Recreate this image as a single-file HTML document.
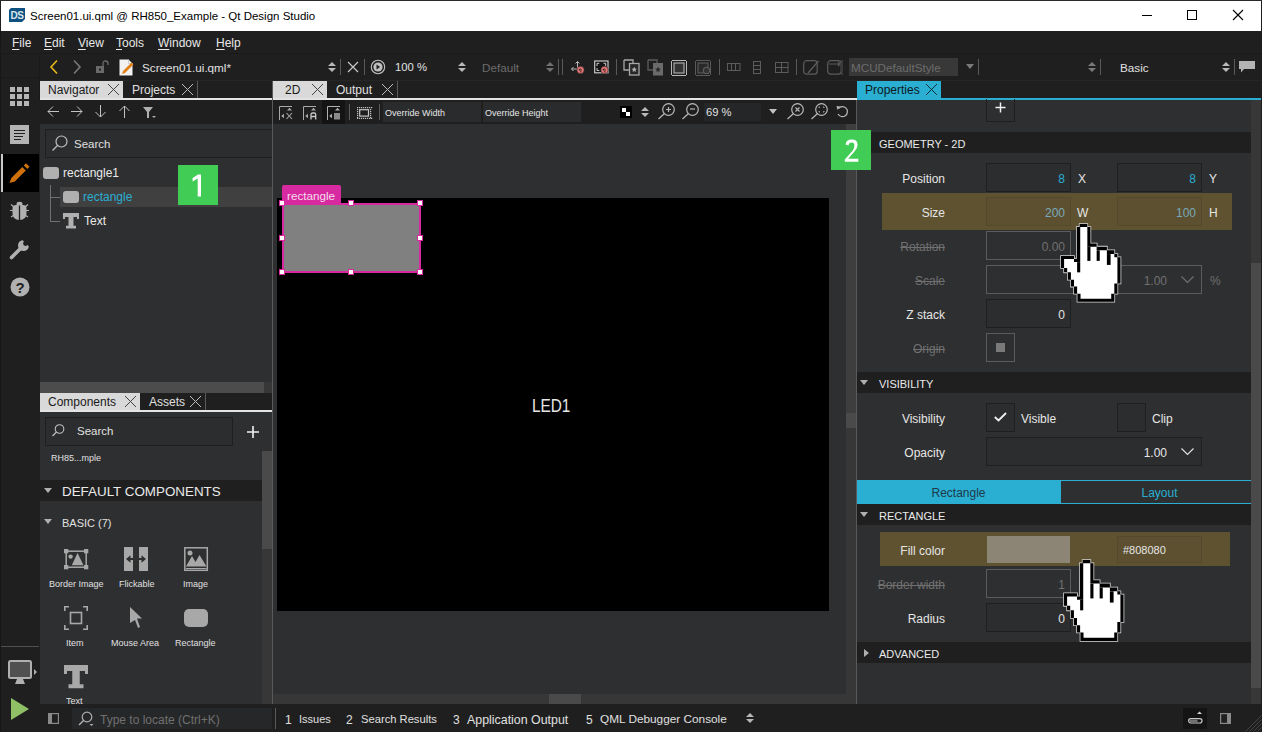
<!DOCTYPE html>
<html><head><meta charset="utf-8">
<style>
*{margin:0;padding:0;box-sizing:border-box}
html,body{width:1262px;height:732px;overflow:hidden;background:#1f1f1f;font-family:"Liberation Sans",sans-serif;color:#e6e6e6}
.a{position:absolute}
.t{position:absolute;white-space:nowrap;line-height:1;margin-top:1px}
svg{position:absolute;overflow:visible}
.sep{position:absolute;width:1px;background:#5a5a5a}
u{text-decoration:underline;text-underline-offset:1.5px;text-decoration-thickness:1px}
</style></head><body>
<!-- title bar -->
<div class="a" style="left:1px;top:1px;width:1260px;height:30px;background:#fff"></div>
<div class="a" style="left:0;top:0;width:1262px;height:1px;background:#2a2a2a"></div>
<svg style="left:9px;top:8px" width="16" height="14" viewBox="0 0 16 14"><path d="M2 0H16V11L13 14H0V2Z" fill="#0e5180"/><text x="1.6" y="11.2" font-family="Liberation Sans" font-weight="bold" font-size="10" fill="#d8e4ec" letter-spacing="-0.6">DS</text></svg>
<div class="t" style="left:30px;top:10px;font-size:11.5px;color:#000">Screen01.ui.qml @ RH850_Example - Qt Design Studio</div>
<div class="a" style="left:1142px;top:15px;width:10px;height:1px;background:#000"></div>
<div class="a" style="left:1187px;top:10px;width:10px;height:10px;border:1px solid #000"></div>
<svg style="left:1233px;top:10px" width="10" height="10" viewBox="0 0 10 10"><path d="M0 0L10 10M10 0L0 10" stroke="#000" stroke-width="1.1"/></svg>

<!-- menu bar -->
<div class="t" style="left:12px;top:36px;font-size:12px;color:#e8e8e8"><u>F</u>ile</div>
<div class="t" style="left:44px;top:36px;font-size:12px;color:#e8e8e8"><u>E</u>dit</div>
<div class="t" style="left:78px;top:36px;font-size:12px;color:#e8e8e8"><u>V</u>iew</div>
<div class="t" style="left:116px;top:36px;font-size:12px;color:#e8e8e8"><u>T</u>ools</div>
<div class="t" style="left:158px;top:36px;font-size:12px;color:#e8e8e8"><u>W</u>indow</div>
<div class="t" style="left:216px;top:36px;font-size:12px;color:#e8e8e8"><u>H</u>elp</div>

<!-- left mode sidebar -->
<div class="a" style="left:0;top:53px;width:40px;height:679px;background:#1f1f1f"></div>
<div class="a" style="left:0;top:31px;width:1px;height:701px;background:#171717"></div>
<div class="a" style="left:0;top:53px;width:1262px;height:1px;background:#1a1a1a"></div>
<div class="a" style="left:1px;top:77px;width:38px;height:1px;background:#1a1a1a"></div>
<div class="a" style="left:39px;top:54px;width:1px;height:46px;background:#1a1a1a"></div>
<div class="a" style="left:40px;top:80px;width:1222px;height:1px;background:#262626"></div>
<svg style="left:10px;top:87px" width="20" height="20" viewBox="0 0 20 20" fill="#b4b4b4"><rect x="0" y="0" width="5" height="5"/><rect x="7" y="0" width="5" height="5"/><rect x="14" y="0" width="5" height="5"/><rect x="0" y="7" width="5" height="5"/><rect x="7" y="7" width="5" height="5"/><rect x="14" y="7" width="5" height="5"/><rect x="0" y="14" width="5" height="5"/><rect x="7" y="14" width="5" height="5"/><rect x="14" y="14" width="5" height="5"/></svg>
<svg style="left:10px;top:125px" width="20" height="20" viewBox="0 0 20 20"><rect x="0" y="0" width="19" height="19" fill="#b4b4b4"/><path d="M4 5.5H15M4 8.5H15M4 11.5H13M4 14.5H11" stroke="#1f1f1f" stroke-width="1.2"/></svg>
<div class="a" style="left:3px;top:154px;width:36px;height:38px;background:#000"></div>
<div class="a" style="left:1px;top:154px;width:2px;height:38px;background:#c8c8c8"></div>
<svg style="left:9px;top:163px" width="21" height="21" viewBox="0 0 21 21"><path d="M0.5 20L2.3 15L13.3 4L16.8 7.5L5.8 18.5Z" fill="#d0700a"/><path d="M14.8 2.5L17 0.3L20.5 3.8L18.3 6Z" fill="#d0700a"/></svg>
<svg style="left:9px;top:200px" width="22" height="22" viewBox="0 0 22 22" fill="#b0b0b0"><ellipse cx="10.5" cy="4" rx="3" ry="2.3"/><path d="M3.5 8Q3.5 5 7 5H14Q17.5 5 17.5 8V13Q17.5 20 10.5 20Q3.5 20 3.5 13Z"/><path d="M10.5 5.5V20" stroke="#1f1f1f" stroke-width="1.3"/><path d="M1 10.5H4M17 10.5H20M2 4.5L5 7M19 4.5L16 7M2 17L5 15M19 17L16 15" stroke="#b0b0b0" stroke-width="1.2"/></svg>
<svg style="left:10px;top:239px" width="20" height="20" viewBox="0 0 20 20"><path d="M1.5 18.5L10 10" stroke="#b0b0b0" stroke-width="3.6" stroke-linecap="round"/><circle cx="13.5" cy="6.5" r="5.5" fill="#b0b0b0"/><path d="M12 0.5L19.5 8L20 0Z" fill="#1f1f1f"/><circle cx="15.5" cy="4.5" r="2.4" fill="#1f1f1f"/></svg>
<svg style="left:10px;top:277px" width="20" height="20" viewBox="0 0 20 20"><circle cx="10" cy="10" r="9.5" fill="#b0b0b0"/><text x="10" y="15.5" text-anchor="middle" font-family="Liberation Sans" font-weight="bold" font-size="15" fill="#1f1f1f">?</text></svg>
<div class="a" style="left:1px;top:646px;width:38px;height:1px;background:#505050"></div>
<svg style="left:8px;top:660px" width="28" height="26" viewBox="0 0 28 26"><rect x="1" y="1" width="22" height="17" rx="1.5" fill="#505050" stroke="#b0b0b0" stroke-width="2"/><path d="M9 19H15L17 24H7Z" fill="#b0b0b0"/><path d="M26 9L29 12L26 15Z" fill="#b0b0b0"/></svg>
<svg style="left:11px;top:698px" width="19" height="22" viewBox="0 0 19 22"><path d="M0 0L18 11L0 22Z" fill="#8fc066"/></svg>

<!-- main toolbar -->
<svg style="left:50px;top:60px" width="8" height="14" viewBox="0 0 8 14"><path d="M7 0.5L1 7L7 13.5" stroke="#e8b818" stroke-width="1.6" fill="none"/></svg>
<svg style="left:73px;top:60px" width="8" height="14" viewBox="0 0 8 14"><path d="M1 0.5L7 7L1 13.5" stroke="#7a7a7a" stroke-width="1.6" fill="none"/></svg>
<svg style="left:96px;top:60px" width="13" height="13" viewBox="0 0 13 13"><rect x="0" y="6" width="8" height="7" fill="#6a6a6a"/><rect x="3" y="8.5" width="2" height="2" fill="#1f1f1f"/><path d="M7 6V3.5Q7 1 9.5 1Q12 1 12 3.5V5" stroke="#6a6a6a" stroke-width="1.3" fill="none"/></svg>
<svg style="left:119px;top:59px" width="15" height="17" viewBox="0 0 15 17"><path d="M0.5 0.5H9.5L13.5 4.5V16.5H0.5Z" fill="#f2f2f2"/><path d="M9.5 0.5V4.5H13.5" fill="none" stroke="#c8c8c8" stroke-width="0.8"/><path d="M3 15L4 12L12.5 3.5L14.5 5.5L6 14Z" fill="#e0801a"/></svg>
<div class="t" style="left:142px;top:61px;font-size:11.7px;color:#e0e0e0">Screen01.ui.qml*</div>
<!-- toolbar continued -->
<svg style="left:328px;top:62px" width="8" height="11" viewBox="0 0 8 11" fill="#b8b8b8"><path d="M4 0L8 4H0Z"/><path d="M0 6H8L4 10Z"/></svg>
<div class="sep" style="left:340px;top:59px;height:16px"></div>
<svg style="left:348px;top:62px" width="10" height="10" viewBox="0 0 10 10"><path d="M0 0L10 10M10 0L0 10" stroke="#c8c8c8" stroke-width="1.2"/></svg>
<div class="sep" style="left:364px;top:59px;height:16px"></div>
<svg style="left:370px;top:59px" width="16" height="16" viewBox="0 0 16 16"><circle cx="8" cy="8" r="6.7" fill="none" stroke="#c0c0c0" stroke-width="1.1"/><circle cx="8" cy="8" r="4.6" fill="#c0c0c0"/><path d="M6.5 5.6L10.2 8L6.5 10.4Z" fill="#1f1f1f"/></svg>
<div class="t" style="left:395px;top:61px;font-size:11.3px;color:#e0e0e0">100 %</div>
<svg style="left:458px;top:62px" width="8" height="11" viewBox="0 0 8 11" fill="#b8b8b8"><path d="M4 0L8 4H0Z"/><path d="M0 6H8L4 10Z"/></svg>
<div class="t" style="left:482px;top:61px;font-size:11.7px;color:#6c6c6c">Default</div>
<svg style="left:546px;top:62px" width="8" height="11" viewBox="0 0 8 11" fill="#707070"><path d="M4 0L8 4H0Z"/><path d="M0 6H8L4 10Z"/></svg>
<div class="sep" style="left:558px;top:59px;height:16px"></div>
<div class="sep" style="left:562px;top:59px;height:16px"></div>
<svg style="left:570px;top:60px" width="16" height="16" viewBox="0 0 16 16"><path d="M7.5 1.5V11M1.5 9H10M7.5 1.5L5.5 3.5M7.5 1.5L9.5 3.5M1.5 9L3.5 7M1.5 9L3.5 11" stroke="#b8b8b8" stroke-width="1" fill="none"/><circle cx="10.5" cy="10" r="3.7" fill="#e87878" stroke="#1f1f1f" stroke-width="0.6"/><path d="M8.8 10H12M10.5 8.3L9 10M10 11.8H11.5" stroke="#2a1a1a" stroke-width="0.9" fill="none"/></svg>
<svg style="left:594px;top:60px" width="16" height="16" viewBox="0 0 16 16"><rect x="0.7" y="1" width="13.3" height="11.8" fill="#141414" stroke="#c8c8c8" stroke-width="1.2"/><path d="M3 6V3.3H5.3M9.5 3.3H11.7V6M3 8V10.5H5.3" stroke="#c8c8c8" stroke-width="1" fill="none"/><circle cx="10.5" cy="10" r="3.7" fill="#e87878" stroke="#1f1f1f" stroke-width="0.6"/><path d="M8.8 10H12M10.5 8.3L9 10M10 11.8H11.5" stroke="#2a1a1a" stroke-width="0.9" fill="none"/></svg>
<div class="sep" style="left:616px;top:59px;height:16px"></div>
<svg style="left:623px;top:59px" width="17" height="17" viewBox="0 0 17 17"><path d="M1 1H10V6M6 11H1V1" fill="none" stroke="#a8a8a8" stroke-width="1.3"/><rect x="6.5" y="4.5" width="9.5" height="11.5" fill="#262626" stroke="#a8a8a8" stroke-width="1.3"/><path d="M11.2 7.5L12 9.5L14 9.7L12.5 11L13 13L11.2 12L9.5 13L10 11L8.5 9.7L10.5 9.5Z" fill="#b0b0b0"/></svg>
<svg style="left:647px;top:59px" width="17" height="17" viewBox="0 0 17 17"><path d="M1 1H10V6M6 11H1V1" fill="none" stroke="#5c5c5c" stroke-width="1.3"/><rect x="6" y="4" width="10" height="12.5" fill="#6a6a6a"/><path d="M11 7.5L11.8 9.5L13.8 9.7L12.3 11L12.8 13L11 12L9.3 13L9.8 11L8.3 9.7L10.3 9.5Z" fill="#262626"/></svg>
<svg style="left:671px;top:60px" width="16" height="16" viewBox="0 0 16 16"><path d="M1 0.5H15M1 15.5H15M0.5 1V15M15.5 1V15" stroke="#b8b8b8" stroke-width="1"/><rect x="3" y="3" width="10" height="10" fill="#333" stroke="#aaa" stroke-width="1.2"/></svg>
<svg style="left:695px;top:60px" width="16" height="16" viewBox="0 0 16 16"><path d="M1 0.5H15M1 15.5H15M0.5 1V15M15.5 1V15" stroke="#5a5a5a" stroke-width="1"/><rect x="3" y="3" width="10" height="10" fill="#2a2a2a" stroke="#5a5a5a" stroke-width="1.2"/><circle cx="11.5" cy="10.5" r="3.3" fill="#333" stroke="#666" stroke-width="1"/></svg>
<div class="sep" style="left:719px;top:59px;height:16px"></div>
<svg style="left:727px;top:63px" width="14" height="8" viewBox="0 0 14 8"><rect x="0.5" y="0.5" width="12.5" height="7" fill="none" stroke="#5c5c5c"/><path d="M4.5 0.5V7.5M8.5 0.5V7.5" stroke="#5c5c5c"/></svg>
<svg style="left:753px;top:61px" width="8" height="13" viewBox="0 0 8 13"><rect x="0.5" y="0.5" width="7" height="12" fill="none" stroke="#5c5c5c"/><path d="M0.5 4.5H7.5M0.5 8.5H7.5" stroke="#5c5c5c"/></svg>
<svg style="left:775px;top:62px" width="14" height="11" viewBox="0 0 14 11"><rect x="0.5" y="0.5" width="12.5" height="10" fill="none" stroke="#5c5c5c"/><path d="M6.5 0.5V10.5M0.5 5.5H13" stroke="#5c5c5c"/></svg>
<div class="sep" style="left:796px;top:59px;height:16px"></div>
<svg style="left:803px;top:60px" width="17" height="15" viewBox="0 0 17 15"><rect x="0.7" y="0.7" width="13.5" height="13.5" rx="3" fill="none" stroke="#5c5c5c" stroke-width="1.2"/><path d="M5 13L15.5 1" stroke="#5c5c5c" stroke-width="1.3"/></svg>
<svg style="left:827px;top:60px" width="15" height="15" viewBox="0 0 15 15"><rect x="0.7" y="0.7" width="13.5" height="13.5" rx="3" fill="none" stroke="#5c5c5c" stroke-width="1.2"/><path d="M2 4H13M11 2L13 4L11 6" stroke="#5c5c5c" stroke-width="1.1" fill="none"/></svg>
<div class="a" style="left:841px;top:60px;width:2px;height:15px;background:#3a3a3a"></div>
<div class="a" style="left:849px;top:58px;width:109px;height:18px;background:#383838"></div>
<div class="t" style="left:851px;top:61px;font-size:11.7px;color:#6c6c6c">MCUDefaultStyle</div>
<svg style="left:966px;top:64px" width="8" height="5" viewBox="0 0 8 5"><path d="M0 0H8L4 5Z" fill="#7a7a7a"/></svg>
<div class="sep" style="left:978px;top:59px;height:16px"></div>
<svg style="left:1088px;top:62px" width="8" height="11" viewBox="0 0 8 11" fill="#7a7a7a"><path d="M4 0L8 4H0Z"/><path d="M0 6H8L4 10Z"/></svg>
<div class="sep" style="left:1100px;top:59px;height:16px"></div>
<div class="t" style="left:1120px;top:61px;font-size:11.7px;color:#e0e0e0">Basic</div>
<svg style="left:1222px;top:62px" width="8" height="11" viewBox="0 0 8 11" fill="#b8b8b8"><path d="M4 0L8 4H0Z"/><path d="M0 6H8L4 10Z"/></svg>
<div class="sep" style="left:1234px;top:59px;height:16px"></div>
<svg style="left:1239px;top:61px" width="16" height="12" viewBox="0 0 16 12"><path d="M0 0H16V8H5L2 11.5V8H0Z" fill="#b4b4b4"/></svg>
<!-- ===== NAVIGATOR PANEL ===== -->
<div class="a" style="left:40px;top:81px;width:83px;height:17px;background:#d9d9d9"></div>
<div class="t" style="left:48px;top:83px;font-size:12px;color:#1a1a1a">Navigator</div>
<svg style="left:108px;top:84px" width="11" height="11" viewBox="0 0 11 11"><path d="M0 0L11 11M11 0L0 11" stroke="#444" stroke-width="1"/></svg>
<div class="t" style="left:132px;top:83px;font-size:12px;color:#e0e0e0">Projects</div>
<svg style="left:182px;top:84px" width="11" height="11" viewBox="0 0 11 11"><path d="M0 0L11 11M11 0L0 11" stroke="#bdbdbd" stroke-width="1"/></svg>
<div class="a" style="left:197px;top:81px;width:1px;height:17px;background:#5a5a5a"></div>
<div class="a" style="left:40px;top:98px;width:232px;height:2px;background:#e4e4e4"></div>
<!-- nav toolbar arrows -->
<svg style="left:47px;top:106px" width="13" height="12" viewBox="0 0 13 12"><path d="M12 5.5H1M6 0.5L1 5.5L6 10.5" stroke="#c4c4c4" stroke-width="1" fill="none"/></svg>
<svg style="left:71px;top:106px" width="13" height="12" viewBox="0 0 13 12"><path d="M0 5.5H11M6 0.5L11 5.5L6 10.5" stroke="#c4c4c4" stroke-width="1" fill="none"/></svg>
<svg style="left:95px;top:105px" width="12" height="13" viewBox="0 0 12 13"><path d="M5.5 0V12M0.5 7L5.5 12L10.5 7" stroke="#c4c4c4" stroke-width="1" fill="none"/></svg>
<svg style="left:119px;top:105px" width="12" height="13" viewBox="0 0 12 13"><path d="M5.5 13V1M0.5 6L5.5 1L10.5 6" stroke="#c4c4c4" stroke-width="1" fill="none"/></svg>
<svg style="left:143px;top:107px" width="14" height="12" viewBox="0 0 14 12"><path d="M0 0H10L6 5V11H4V5Z" fill="#b0b0b0"/><path d="M9 9H13L11 11Z" fill="#b0b0b0"/></svg>
<!-- nav content -->
<div class="a" style="left:40px;top:124px;width:232px;height:258px;background:#2e2f30"></div>
<div class="a" style="left:45px;top:129px;width:227px;height:29px;background:#2c2d2e;border:1px solid #1f1f1f;border-right:none"></div>
<svg style="left:52px;top:135px" width="17" height="17" viewBox="0 0 17 17"><circle cx="9.5" cy="6.5" r="5.5" fill="none" stroke="#c0c0c0" stroke-width="1.2"/><path d="M5.5 10.5L0.5 15.5" stroke="#c0c0c0" stroke-width="1.2"/></svg>
<div class="t" style="left:74px;top:138px;font-size:11.5px;color:#e0e0e0">Search</div>
<div class="a" style="left:43px;top:167px;width:16px;height:12px;background:#b0b0b0;border-radius:3px"></div>
<div class="t" style="left:63px;top:166px;font-size:12px;color:#eaeaea">rectangle1</div>
<div class="a" style="left:50px;top:185px;width:1px;height:37px;background:#707070"></div>
<div class="a" style="left:50px;top:197px;width:10px;height:1px;background:#707070"></div>
<div class="a" style="left:50px;top:221px;width:10px;height:1px;background:#707070"></div>
<div class="a" style="left:60px;top:187px;width:212px;height:20px;background:#404040"></div>
<div class="a" style="left:63px;top:191px;width:16px;height:12px;background:#b0b0b0;border-radius:3px"></div>
<div class="t" style="left:83px;top:190px;font-size:12px;color:#2aafd3">rectangle</div>
<svg style="left:63px;top:213px" width="16" height="16" viewBox="0 0 16 16"><path d="M0 0H16V6H14V4H10.5V12.8H13V15.5H3V12.8H5.5V4H2V6H0Z" fill="#b0b0b0"/></svg>
<div class="t" style="left:84px;top:214px;font-size:12px;color:#eaeaea">Text</div>
<div class="a" style="left:178px;top:165px;width:40px;height:40px;background:#41cd55"></div>
<svg style="left:178px;top:165px" width="40" height="40" viewBox="0 0 40 40"><path d="M19.7 9.4H23V31.6H19.7V13.6L14.6 16.4V13L20 9.4Z" fill="#fff"/></svg>
<!-- nav h scrollbar -->
<div class="a" style="left:40px;top:382px;width:224px;height:11px;background:#4c4c4c"></div>
<div class="a" style="left:264px;top:382px;width:8px;height:11px;background:#373737"></div>

<!-- ===== COMPONENTS PANEL ===== -->
<div class="a" style="left:40px;top:393px;width:100px;height:17px;background:#d9d9d9"></div>
<div class="t" style="left:48px;top:395px;font-size:12px;color:#1a1a1a">Components</div>
<svg style="left:125px;top:396px" width="11" height="11" viewBox="0 0 11 11"><path d="M0 0L11 11M11 0L0 11" stroke="#444" stroke-width="1"/></svg>
<div class="t" style="left:149px;top:395px;font-size:12px;color:#e0e0e0">Assets</div>
<svg style="left:190px;top:396px" width="11" height="11" viewBox="0 0 11 11"><path d="M0 0L11 11M11 0L0 11" stroke="#bdbdbd" stroke-width="1"/></svg>
<div class="a" style="left:205px;top:393px;width:1px;height:17px;background:#5a5a5a"></div>
<div class="a" style="left:40px;top:410px;width:232px;height:2px;background:#e4e4e4"></div>
<div class="a" style="left:40px;top:412px;width:232px;height:292px;background:#2e2f30"></div>
<div class="a" style="left:45px;top:417px;width:188px;height:29px;background:#2c2d2e;border:1px solid #1f1f1f"></div>
<svg style="left:52px;top:424px" width="13" height="13" viewBox="0 0 13 13"><circle cx="7.5" cy="5" r="4.3" fill="none" stroke="#c0c0c0" stroke-width="1.1"/><path d="M4.5 8L0.5 12" stroke="#c0c0c0" stroke-width="1.2"/></svg>
<div class="t" style="left:77px;top:425px;font-size:11.5px;color:#e0e0e0">Search</div>
<svg style="left:247px;top:426px" width="12" height="12" viewBox="0 0 12 12"><path d="M6 0V12M0 6H12" stroke="#f0f0f0" stroke-width="1.6"/></svg>
<div class="t" style="left:51px;top:453px;font-size:9px;color:#e0e0e0">RH85...mple</div>
<div class="a" style="left:262px;top:451px;width:10px;height:253px;background:#373737"></div>
<div class="a" style="left:262px;top:451px;width:10px;height:98px;background:#4a4a4a"></div>
<div class="a" style="left:40px;top:480px;width:222px;height:21px;background:#1f1f1f"></div>
<svg style="left:44px;top:488px" width="8" height="5" viewBox="0 0 8 5"><path d="M0 0H8L4 5Z" fill="#b0b0b0"/></svg>
<div class="t" style="left:62px;top:484px;font-size:13.4px;color:#eaeaea">DEFAULT COMPONENTS</div>
<svg style="left:44px;top:519px" width="8" height="5" viewBox="0 0 8 5"><path d="M0 0H8L4 5Z" fill="#b0b0b0"/></svg>
<div class="t" style="left:62px;top:517px;font-size:11px;color:#e0e0e0">BASIC (7)</div>
<!-- component icons -->
<svg style="left:64px;top:549px" width="25" height="21" viewBox="0 0 25 21" fill="#a8a8a8"><rect x="2.2" y="2.2" width="20" height="16" fill="none" stroke="#a8a8a8" stroke-width="1.5"/><rect x="0" y="0" width="4.3" height="4.3"/><rect x="20" y="0" width="4.3" height="4.3"/><rect x="0" y="16" width="4.3" height="4.3"/><rect x="20" y="16" width="4.3" height="4.3"/><circle cx="6.6" cy="7.6" r="2.2"/><path d="M7.8 16.2L13.5 4L19.5 16.2Z"/></svg>
<div class="t" style="left:49px;top:579px;font-size:9px;color:#e0e0e0">Border Image</div>
<svg style="left:123px;top:547px" width="26" height="25" viewBox="0 0 26 25"><rect x="1" y="0" width="9" height="24" fill="#a8a8a8"/><rect x="16" y="0" width="9" height="24" fill="#a8a8a8"/><path d="M3 12L7.5 8.3V11H10V13H7.5V15.7Z" fill="#2e2f30"/><path d="M23 12L18.5 8.3V11H16V13H18.5V15.7Z" fill="#2e2f30"/></svg>
<div class="t" style="left:119px;top:579px;font-size:9px;color:#e0e0e0">Flickable</div>
<svg style="left:184px;top:547px" width="25" height="25" viewBox="0 0 25 25" fill="#a8a8a8"><rect x="0.8" y="0.8" width="22.5" height="22.5" fill="none" stroke="#a8a8a8" stroke-width="1.5"/><circle cx="6" cy="6" r="2.5"/><path d="M2 19.5L8 9L11.5 15L15.5 8L22.5 19.5Z"/><rect x="2" y="21" width="20.5" height="1"/></svg>
<div class="t" style="left:183px;top:579px;font-size:9px;color:#e0e0e0">Image</div>
<svg style="left:64px;top:606px" width="25" height="25" viewBox="0 0 25 25"><path d="M0.8 5V0.8H5M19 0.8H23.2V5M23.2 19V23.2H19M5 23.2H0.8V19" fill="none" stroke="#a8a8a8" stroke-width="1.6"/><rect x="6.5" y="6.5" width="11" height="11" fill="none" stroke="#a8a8a8" stroke-width="1.6"/></svg>
<div class="t" style="left:66px;top:638px;font-size:9px;color:#e0e0e0">Item</div>
<svg style="left:130px;top:607px" width="13" height="23" viewBox="0 0 13 23"><path d="M0 0L12 11.5H7L10 20L8 21L5 13L0 16Z" fill="#a8a8a8"/></svg>
<div class="t" style="left:111px;top:638px;font-size:9px;color:#e0e0e0">Mouse Area</div>
<div class="a" style="left:184px;top:609px;width:24px;height:18px;background:#a8a8a8;border-radius:5px"></div>
<div class="t" style="left:175px;top:638px;font-size:9px;color:#e0e0e0">Rectangle</div>
<svg style="left:64px;top:665px" width="24" height="24" viewBox="0 0 16 16"><path d="M0 0H16V6H14V4H10.5V12.8H13V15.5H3V12.8H5.5V4H2V6H0Z" fill="#a8a8a8"/></svg>
<div class="a" style="left:40px;top:696px;width:222px;height:8px;overflow:hidden"><div class="t" style="left:26px;top:0px;font-size:9px;color:#e0e0e0">Text</div></div>
<!-- ===== CANVAS (2D) ===== -->
<div class="a" style="left:272px;top:81px;width:1px;height:623px;background:#5a5a5a"></div>
<div class="a" style="left:273px;top:81px;width:54px;height:17px;background:#d9d9d9"></div>
<div class="t" style="left:285px;top:83px;font-size:12px;color:#1a1a1a">2D</div>
<svg style="left:312px;top:84px" width="11" height="11" viewBox="0 0 11 11"><path d="M0 0L11 11M11 0L0 11" stroke="#444" stroke-width="1"/></svg>
<div class="t" style="left:336px;top:83px;font-size:12px;color:#e0e0e0">Output</div>
<svg style="left:382px;top:84px" width="11" height="11" viewBox="0 0 11 11"><path d="M0 0L11 11M11 0L0 11" stroke="#bdbdbd" stroke-width="1"/></svg>
<div class="a" style="left:397px;top:81px;width:1px;height:17px;background:#5a5a5a"></div>
<div class="a" style="left:273px;top:98px;width:584px;height:2px;background:#e4e4e4"></div>
<!-- canvas toolbar -->
<div class="a" style="left:322px;top:100px;width:23px;height:24px;background:#141414"></div>
<svg style="left:278px;top:105px" width="16" height="16" viewBox="0 0 16 16"><path d="M1.5 15V1.5H14" stroke="#a8a8a8" stroke-width="1" fill="none"/><path d="M9 5.5H14L11.5 2.8Z" fill="#a8a8a8"/><path d="M3.2 11L6 8.8V13.2Z" fill="#a8a8a8"/><path d="M8.5 8L14 14M14 8L8.5 14" stroke="#a8a8a8" stroke-width="1.1"/></svg>
<svg style="left:302px;top:105px" width="16" height="16" viewBox="0 0 16 16"><path d="M1.5 15V1.5H14" stroke="#a8a8a8" stroke-width="1" fill="none"/><path d="M9 5.5H14L11.5 2.8Z" fill="#a8a8a8"/><path d="M3.2 11L6 8.8V13.2Z" fill="#a8a8a8"/><path d="M9 14.5V9.5Q9 8 10.5 8H12.2Q13.7 8 13.7 9.5V14.5M9 11.5H13.7" stroke="#c8c8c8" stroke-width="1.3" fill="none"/></svg>
<svg style="left:326px;top:105px" width="16" height="16" viewBox="0 0 16 16"><path d="M1.5 15V1.5H14" stroke="#b0b0b0" stroke-width="1" fill="none"/><path d="M9 5.5H14L11.5 2.8Z" fill="#b0b0b0"/><path d="M3.2 11L6 8.8V13.2Z" fill="#b0b0b0"/><rect x="8" y="8" width="6" height="6.5" fill="#8a8a8a"/></svg>
<div class="sep" style="left:349px;top:104px;height:16px"></div>
<svg style="left:357px;top:107px" width="15" height="13" viewBox="0 0 15 13"><g fill="#c0c0c0"><rect x="0" y="0" width="1.2" height="1.2"/><rect x="0" y="10.8" width="1.2" height="1.2"/><rect x="2" y="0" width="1.2" height="1.2"/><rect x="2" y="10.8" width="1.2" height="1.2"/><rect x="4" y="0" width="1.2" height="1.2"/><rect x="4" y="10.8" width="1.2" height="1.2"/><rect x="6" y="0" width="1.2" height="1.2"/><rect x="6" y="10.8" width="1.2" height="1.2"/><rect x="8" y="0" width="1.2" height="1.2"/><rect x="8" y="10.8" width="1.2" height="1.2"/><rect x="10" y="0" width="1.2" height="1.2"/><rect x="10" y="10.8" width="1.2" height="1.2"/><rect x="12" y="0" width="1.2" height="1.2"/><rect x="12" y="10.8" width="1.2" height="1.2"/><rect x="14" y="0" width="1.2" height="1.2"/><rect x="14" y="10.8" width="1.2" height="1.2"/><rect x="0" y="2" width="1.2" height="1.2"/><rect x="13" y="2" width="1.2" height="1.2"/><rect x="0" y="4" width="1.2" height="1.2"/><rect x="13" y="4" width="1.2" height="1.2"/><rect x="0" y="6" width="1.2" height="1.2"/><rect x="13" y="6" width="1.2" height="1.2"/><rect x="0" y="8" width="1.2" height="1.2"/><rect x="13" y="8" width="1.2" height="1.2"/><rect x="0" y="10" width="1.2" height="1.2"/><rect x="13" y="10" width="1.2" height="1.2"/></g><rect x="2.7" y="2.7" width="8.8" height="6.4" fill="none" stroke="#c8c8c8" stroke-width="1.2"/></svg>
<div class="sep" style="left:379px;top:104px;height:16px"></div>
<div class="a" style="left:383px;top:102px;width:98px;height:20px;background:#2a2b2c"></div>
<div class="t" style="left:385px;top:108px;font-size:9px;color:#e6e6e6">Override Width</div>
<div class="a" style="left:483px;top:102px;width:98px;height:20px;background:#2a2b2c"></div>
<div class="t" style="left:485px;top:108px;font-size:9px;color:#e6e6e6">Override Height</div>
<svg style="left:620px;top:106px" width="12" height="12" viewBox="0 0 12 12"><rect width="12" height="12" fill="#000"/><rect x="2" y="2" width="4" height="4" fill="#fff"/><rect x="6" y="6" width="4" height="4" fill="#fff"/></svg>
<svg style="left:641px;top:107px" width="8" height="11" viewBox="0 0 8 11" fill="#b8b8b8"><path d="M4 0L8 4H0Z"/><path d="M0 6H8L4 10Z"/></svg>
<svg style="left:658px;top:103px" width="17" height="17" viewBox="0 0 17 17"><circle cx="10.5" cy="6.5" r="5.8" fill="none" stroke="#b8b8b8" stroke-width="1.2"/><path d="M6.5 10.5L0.5 16" stroke="#b8b8b8" stroke-width="1.2"/><path d="M8 6.5H13M10.5 4V9" stroke="#b8b8b8" stroke-width="1.2"/></svg>
<svg style="left:682px;top:103px" width="17" height="17" viewBox="0 0 17 17"><circle cx="10.5" cy="6.5" r="5.8" fill="none" stroke="#b8b8b8" stroke-width="1.2"/><path d="M6.5 10.5L0.5 16" stroke="#b8b8b8" stroke-width="1.2"/><path d="M8 6H13" stroke="#b8b8b8" stroke-width="1.2"/></svg>
<div class="a" style="left:704px;top:103px;width:57px;height:18px;background:#252627"></div>
<div class="t" style="left:706px;top:106px;font-size:11.2px;color:#e0e0e0">69 %</div>
<svg style="left:769px;top:109px" width="8" height="5" viewBox="0 0 8 5"><path d="M0 0H8L4 5Z" fill="#c0c0c0"/></svg>
<svg style="left:787px;top:103px" width="17" height="17" viewBox="0 0 17 17"><circle cx="10.5" cy="6.5" r="5.8" fill="none" stroke="#b8b8b8" stroke-width="1.2"/><path d="M6.5 10.5L0.5 16" stroke="#b8b8b8" stroke-width="1.2"/><path d="M8.5 4.5L12.5 8.5M12.5 4.5L8.5 8.5" stroke="#b8b8b8" stroke-width="1.1"/></svg>
<svg style="left:811px;top:103px" width="17" height="17" viewBox="0 0 17 17"><circle cx="10.5" cy="6.5" r="5.8" fill="none" stroke="#b8b8b8" stroke-width="1.2"/><path d="M6.5 10.5L0.5 16" stroke="#b8b8b8" stroke-width="1.2"/><path d="M8 5V4H9M12 4H13V5M13 8V9H12M9 9H8V8" stroke="#b8b8b8" stroke-width="0.9" fill="none"/></svg>
<svg style="left:836px;top:105px" width="12" height="13" viewBox="0 0 12 13"><path d="M2.5 3.5A5 5 0 1 1 2 9" stroke="#b8b8b8" stroke-width="1.2" fill="none"/><path d="M0.5 1L4 1.5L1.5 5Z" fill="#b8b8b8"/></svg>
<!-- canvas bg -->
<div class="a" style="left:273px;top:124px;width:573px;height:570px;background:#2e2f30"></div>
<div class="a" style="left:846px;top:124px;width:10px;height:580px;background:#373737"></div>
<div class="a" style="left:846px;top:124px;width:10px;height:289px;background:#3e3e3e"></div>
<div class="a" style="left:846px;top:413px;width:10px;height:15px;background:#4a4a4a"></div>
<div class="a" style="left:273px;top:694px;width:573px;height:10px;background:#373737"></div>
<div class="a" style="left:549px;top:694px;width:32px;height:10px;background:#4a4a4a"></div>
<div class="a" style="left:277px;top:198px;width:552px;height:413px;background:#000"></div>
<div class="t" style="left:532px;top:396px;font-size:18.5px;color:#e6e6e6;transform:scaleX(0.83);transform-origin:0 0">LED1</div>
<!-- selection -->
<div class="a" style="left:282px;top:185px;width:59px;height:19px;background:#d82aa0;border-radius:2px 2px 0 0"></div>
<div class="t" style="left:287px;top:189px;font-size:11.7px;color:#f4dcea">rectangle</div>
<div class="a" style="left:282px;top:203px;width:139px;height:70px;background:#808080;border:2px solid #d82aa0"></div>
<div class="a" style="left:279px;top:200px;width:6px;height:6px;background:#fff;border:1px solid #d82aa0"></div>
<div class="a" style="left:279px;top:235px;width:6px;height:6px;background:#fff;border:1px solid #d82aa0"></div>
<div class="a" style="left:279px;top:269px;width:6px;height:6px;background:#fff;border:1px solid #d82aa0"></div>
<div class="a" style="left:348px;top:200px;width:6px;height:6px;background:#fff;border:1px solid #d82aa0"></div>
<div class="a" style="left:348px;top:269px;width:6px;height:6px;background:#fff;border:1px solid #d82aa0"></div>
<div class="a" style="left:417px;top:200px;width:6px;height:6px;background:#fff;border:1px solid #d82aa0"></div>
<div class="a" style="left:417px;top:235px;width:6px;height:6px;background:#fff;border:1px solid #d82aa0"></div>
<div class="a" style="left:417px;top:269px;width:6px;height:6px;background:#fff;border:1px solid #d82aa0"></div>
<div class="a" style="left:856px;top:100px;width:1px;height:604px;background:#5a5a5a"></div>
<!-- ===== PROPERTIES ===== -->
<div class="a" style="left:857px;top:81px;width:84px;height:17px;background:#2aafd3"></div>
<div class="t" style="left:865px;top:83px;font-size:12px;color:#0c1820">Properties</div>
<svg style="left:926px;top:84px" width="11" height="11" viewBox="0 0 11 11"><path d="M0 0L11 11M11 0L0 11" stroke="#10303a" stroke-width="1"/></svg>
<div class="a" style="left:857px;top:98px;width:404px;height:2px;background:#2aafd3"></div>
<div class="a" style="left:857px;top:100px;width:394px;height:604px;background:#2e2f30"></div>
<div class="a" style="left:1251px;top:100px;width:10px;height:604px;background:#373737"></div>
<div class="a" style="left:1251px;top:263px;width:10px;height:425px;background:#4a4a4a"></div>
<div class="a" style="left:986px;top:99px;width:29px;height:23px;border:1px solid #1f1f1f;border-top:none"></div>
<svg style="left:995px;top:102px" width="11" height="11" viewBox="0 0 12 12"><path d="M6 0.5V11.5M0.5 6H11.5" stroke="#f0f0f0" stroke-width="1.6"/></svg>
<!-- geometry header -->
<div class="a" style="left:857px;top:132px;width:394px;height:21px;background:#1f1f1f"></div>
<div class="t" style="left:879px;top:138px;font-size:11px;color:#eaeaea">GEOMETRY - 2D</div>
<div class="a" style="left:831px;top:130px;width:40px;height:40px;background:#41cd55"></div>
<svg style="left:831px;top:130px" width="40" height="40" viewBox="0 0 40 40"><path d="M14.6 14.6Q15 9.6 20.8 9.6Q26.6 9.6 26.6 15Q26.6 18.4 23.5 21.6L17.4 28.6V28.8H27.3V31.8H13.8V29.6L21.6 20.8Q23.4 18.6 23.4 15.6Q23.4 12.6 20.6 12.6Q17.8 12.6 17.6 15.4Z" fill="#fff"/></svg>
<!-- rows -->
<div class="t" style="left:857px;top:172px;width:88px;text-align:right;font-size:12px;color:#e6e6e6">Position</div>
<div class="a" style="left:986px;top:163px;width:85px;height:29px;border:1px solid #1f1f1f;background:#2c2d2e"></div>
<div class="t" style="left:986px;top:172px;width:79px;text-align:right;font-size:12px;color:#2aafd3">8</div>
<div class="t" style="left:1078px;top:172px;font-size:12px;color:#e6e6e6">X</div>
<div class="a" style="left:1117px;top:163px;width:85px;height:29px;border:1px solid #1f1f1f;background:#2c2d2e"></div>
<div class="t" style="left:1117px;top:172px;width:79px;text-align:right;font-size:12px;color:#2aafd3">8</div>
<div class="t" style="left:1209px;top:172px;font-size:12px;color:#e6e6e6">Y</div>

<div class="a" style="left:882px;top:193px;width:350px;height:37px;background:#5e5230"></div>
<div class="t" style="left:857px;top:206px;width:88px;text-align:right;font-size:12px;color:#e6e6e6">Size</div>
<div class="a" style="left:986px;top:197px;width:85px;height:29px;border:1px solid #54492a;background:#5c5030"></div>
<div class="t" style="left:986px;top:206px;width:79px;text-align:right;font-size:12px;color:#7aa8b8">200</div>
<div class="t" style="left:1077px;top:206px;font-size:12px;color:#e6e6e6">W</div>
<div class="a" style="left:1117px;top:197px;width:85px;height:29px;border:1px solid #54492a;background:#5c5030"></div>
<div class="t" style="left:1117px;top:206px;width:79px;text-align:right;font-size:12px;color:#7aa8b8">100</div>
<div class="t" style="left:1209px;top:206px;font-size:12px;color:#e6e6e6">H</div>

<div class="t" style="left:857px;top:240px;width:88px;text-align:right;font-size:12px;color:#707070;text-decoration:line-through">Rotation</div>
<div class="a" style="left:986px;top:231px;width:85px;height:29px;border:1px solid #5c5c5c"></div>
<div class="t" style="left:986px;top:240px;width:79px;text-align:right;font-size:12px;color:#707070">0.00</div>

<div class="t" style="left:857px;top:274px;width:88px;text-align:right;font-size:12px;color:#707070;text-decoration:line-through">Scale</div>
<div class="a" style="left:986px;top:265px;width:216px;height:29px;border:1px solid #5c5c5c"></div>
<div class="t" style="left:1140px;top:274px;width:27px;text-align:right;font-size:12px;color:#707070">1.00</div>
<svg style="left:1181px;top:276px" width="13" height="7" viewBox="0 0 13 7"><path d="M0.5 0.5L6.5 6.5L12.5 0.5" stroke="#707070" stroke-width="1.2" fill="none"/></svg>
<div class="t" style="left:1210px;top:274px;font-size:12px;color:#707070">%</div>

<div class="t" style="left:857px;top:308px;width:88px;text-align:right;font-size:12px;color:#e6e6e6">Z stack</div>
<div class="a" style="left:986px;top:299px;width:85px;height:29px;border:1px solid #1f1f1f;background:#2c2d2e"></div>
<div class="t" style="left:986px;top:308px;width:79px;text-align:right;font-size:12px;color:#e6e6e6">0</div>

<div class="t" style="left:857px;top:342px;width:88px;text-align:right;font-size:12px;color:#707070;text-decoration:line-through">Origin</div>
<div class="a" style="left:986px;top:333px;width:29px;height:29px;border:1px solid #5c5c5c"></div>
<div class="a" style="left:996px;top:343px;width:9px;height:9px;background:#7a7a7a"></div>

<!-- visibility -->
<div class="a" style="left:857px;top:372px;width:394px;height:21px;background:#1f1f1f"></div>
<svg style="left:860px;top:380px" width="8" height="5" viewBox="0 0 8 5"><path d="M0 0H8L4 5Z" fill="#b0b0b0"/></svg>
<div class="t" style="left:879px;top:378px;font-size:11px;color:#eaeaea">VISIBILITY</div>
<div class="t" style="left:857px;top:412px;width:88px;text-align:right;font-size:12px;color:#e6e6e6">Visibility</div>
<div class="a" style="left:986px;top:403px;width:29px;height:29px;border:1px solid #1f1f1f;background:#2c2d2e"></div>
<svg style="left:994px;top:412px" width="13" height="10" viewBox="0 0 13 10"><path d="M0.8 5L4.5 8.5L12 1" stroke="#f0f0f0" stroke-width="1.8" fill="none"/></svg>
<div class="t" style="left:1021px;top:412px;font-size:12px;color:#e6e6e6">Visible</div>
<div class="a" style="left:1117px;top:403px;width:29px;height:29px;border:1px solid #1f1f1f;background:#2c2d2e"></div>
<div class="t" style="left:1152px;top:412px;font-size:12px;color:#e6e6e6">Clip</div>
<div class="t" style="left:857px;top:446px;width:88px;text-align:right;font-size:12px;color:#e6e6e6">Opacity</div>
<div class="a" style="left:986px;top:437px;width:216px;height:29px;border:1px solid #1f1f1f;background:#2c2d2e"></div>
<div class="t" style="left:1140px;top:446px;width:27px;text-align:right;font-size:12px;color:#e6e6e6">1.00</div>
<svg style="left:1181px;top:448px" width="13" height="7" viewBox="0 0 13 7"><path d="M0.5 0.5L6.5 6.5L12.5 0.5" stroke="#e0e0e0" stroke-width="1.2" fill="none"/></svg>

<!-- tab bar -->
<div class="a" style="left:857px;top:480px;width:203px;height:24px;background:#2aafd3"></div>
<div class="t" style="left:857px;top:486px;width:203px;text-align:center;font-size:12px;color:#1f3a48">Rectangle</div>
<div class="a" style="left:1060px;top:480px;width:191px;height:24px;border:1px solid #2aafd3;border-right:none"></div>
<div class="t" style="left:1064px;top:486px;width:191px;text-align:center;font-size:12px;color:#2aafd3">Layout</div>

<!-- rectangle section -->
<div class="a" style="left:857px;top:504px;width:394px;height:21px;background:#1f1f1f"></div>
<svg style="left:860px;top:512px" width="8" height="5" viewBox="0 0 8 5"><path d="M0 0H8L4 5Z" fill="#b0b0b0"/></svg>
<div class="t" style="left:879px;top:510px;font-size:11px;color:#eaeaea">RECTANGLE</div>
<div class="a" style="left:880px;top:532px;width:350px;height:34px;background:#5e5230"></div>
<div class="t" style="left:857px;top:544px;width:88px;text-align:right;font-size:12px;color:#e6e6e6">Fill color</div>
<div class="a" style="left:987px;top:536px;width:83px;height:27px;background:#8c8575"></div>
<div class="a" style="left:1117px;top:536px;width:85px;height:27px;border:1px solid #54492a;background:#5c5030"></div>
<div class="t" style="left:1123px;top:544px;font-size:11px;color:#e6e6e6">#808080</div>
<div class="t" style="left:857px;top:578px;width:88px;text-align:right;font-size:12px;color:#707070;text-decoration:line-through">Border width</div>
<div class="a" style="left:986px;top:569px;width:85px;height:29px;border:1px solid #5c5c5c"></div>
<div class="t" style="left:986px;top:578px;width:79px;text-align:right;font-size:12px;color:#707070">1</div>
<div class="t" style="left:857px;top:612px;width:88px;text-align:right;font-size:12px;color:#e6e6e6">Radius</div>
<div class="a" style="left:986px;top:603px;width:85px;height:29px;border:1px solid #1f1f1f;background:#2c2d2e"></div>
<div class="t" style="left:986px;top:612px;width:79px;text-align:right;font-size:12px;color:#e6e6e6">0</div>
<div class="a" style="left:857px;top:642px;width:394px;height:21px;background:#1f1f1f"></div>
<svg style="left:864px;top:649px" width="5" height="8" viewBox="0 0 5 8"><path d="M0 0V8L5 4Z" fill="#b0b0b0"/></svg>
<div class="t" style="left:879px;top:648px;font-size:11px;color:#eaeaea">ADVANCED</div>

<!-- ===== STATUS BAR ===== -->
<div class="a" style="left:40px;top:704px;width:1222px;height:28px;background:#1f1f1f"></div>
<svg style="left:48px;top:713px" width="12" height="12" viewBox="0 0 12 12"><rect x="0" y="0" width="11" height="11" fill="#8a8a8a"/><rect x="4" y="1.2" width="5.8" height="8.6" fill="#1f1f1f"/></svg>
<div class="a" style="left:72px;top:708px;width:200px;height:21px;background:#262728"></div>
<svg style="left:78px;top:711px" width="17" height="16" viewBox="0 0 17 16"><circle cx="9" cy="6" r="4.8" fill="none" stroke="#b0b0b0" stroke-width="1.2"/><path d="M5.5 9.5L1 14" stroke="#b0b0b0" stroke-width="1.5"/><path d="M11.5 13H15.5L13.5 15Z" fill="#b0b0b0"/></svg>
<div class="t" style="left:100px;top:713px;font-size:12px;color:#707070">Type to locate (Ctrl+K)</div>
<div class="a" style="left:275px;top:708px;width:1px;height:21px;background:#5a5a5a"></div>
<div class="t" style="left:285px;top:713px;font-size:12px;color:#e0e0e0">1</div>
<div class="t" style="left:299px;top:713px;font-size:11px;color:#e0e0e0">Issues</div>
<div class="t" style="left:346px;top:713px;font-size:12px;color:#e0e0e0">2</div>
<div class="t" style="left:361px;top:713px;font-size:11.2px;color:#e0e0e0">Search Results</div>
<div class="t" style="left:453px;top:713px;font-size:12px;color:#e0e0e0">3</div>
<div class="t" style="left:467px;top:713px;font-size:12.4px;color:#e0e0e0">Application Output</div>
<div class="t" style="left:586px;top:713px;font-size:12px;color:#e0e0e0">5</div>
<div class="t" style="left:600px;top:713px;font-size:11.8px;color:#e0e0e0">QML Debugger Console</div>
<svg style="left:746px;top:713px" width="8" height="11" viewBox="0 0 8 11" fill="#b8b8b8"><path d="M4 0L8 4H0Z"/><path d="M0 6H8L4 10Z"/></svg>
<div class="a" style="left:1183px;top:708px;width:24px;height:21px;background:#141414"></div>
<svg style="left:1186px;top:710px" width="18" height="14" viewBox="0 0 18 14"><path d="M13.5 1.5L16 4H11Z" fill="#d0d0d0"/><rect x="2.6" y="8.6" width="13.4" height="4.4" rx="2.2" fill="#141414" stroke="#c8c8c8" stroke-width="1.2"/><rect x="3.5" y="9.6" width="8" height="2.4" fill="#707070"/></svg>
<svg style="left:1220px;top:713px" width="12" height="12" viewBox="0 0 12 12"><rect x="0" y="0" width="11" height="11" fill="#8a8a8a"/><rect x="1.2" y="1.2" width="5.8" height="8.6" fill="#1f1f1f"/></svg>
<svg style="left:1244px;top:714px" width="18" height="18" viewBox="0 0 18 18"><path d="M1.5 17.5L17.5 1.5M5.5 17.5L17.5 5.5M9.5 17.5L17.5 9.5M13.5 17.5L17.5 13.5" stroke="#484848" stroke-width="0.9"/></svg>
<!-- cursors -->
<svg style="left:1058.7px;top:221.7px" width="66" height="84.0" viewBox="-0.645 -0.645 21.29 27.1" preserveAspectRatio="none"><polygon points="6,0 8.5,0 8.5,1 9.5,1 9.5,6.3 11.5,6.3 11.5,7.3 14.8,7.3 14.8,8.5 17.2,8.5 17.2,9.7 18.2,9.7 18.2,10.7 19.2,10.7 19.2,19.2 18.2,19.2 18.2,22.5 17.2,22.5 17.2,25.1 5.3,25.1 5.3,22.5 4.2,22.5 4.2,20.2 3.2,20.2 3.2,18 2.2,18 2.2,15.6 1,15.6 1,14.2 0,14.2 0,10.3 4.2,10.3 4.2,11.3 5.1,11.3 5.1,1 6,1" fill="#000" stroke="#d8d8d8" stroke-width="0.5" stroke-linejoin="miter"/><polygon points="6,0 8.5,0 8.5,1 9.5,1 9.5,6.3 11.5,6.3 11.5,7.3 14.8,7.3 14.8,8.5 17.2,8.5 17.2,9.7 18.2,9.7 18.2,10.7 19.2,10.7 19.2,19.2 18.2,19.2 18.2,22.5 17.2,22.5 17.2,25.1 5.3,25.1 5.3,22.5 4.2,22.5 4.2,20.2 3.2,20.2 3.2,18 2.2,18 2.2,15.6 1,15.6 1,14.2 0,14.2 0,10.3 4.2,10.3 4.2,11.3 5.1,11.3 5.1,1 6,1" fill="#000"/><polygon points="6.2,1 8.5,1 8.5,7.3 11.5,7.3 11.5,8.5 14.8,8.5 14.8,9.7 17.2,9.7 17.2,10.7 18.2,10.7 18.2,19.2 17.2,19.2 17.2,22.5 16.2,22.5 16.2,24.1 6.3,24.1 6.3,22.5 5.2,22.5 5.2,20.2 4.2,20.2 4.2,18 3.2,18 3.2,15.6 2,15.6 2,14.2 1,14.2 1,11.3 4.2,11.3 4.2,12.3 6.2,12.3" fill="#fff"/><rect x="5.2" y="12.3" width="1.00" height="3.30" fill="#000"/><rect x="8.5" y="7.3" width="1.00" height="4.60" fill="#000"/><rect x="11.5" y="8.5" width="1.00" height="3.40" fill="#000"/><rect x="14.8" y="9.7" width="1.20" height="3.50" fill="#000"/></svg>
<svg style="left:1062.4px;top:558.0px" width="66" height="87.3" viewBox="-0.645 -0.645 21.29 27.1" preserveAspectRatio="none"><polygon points="6,0 8.5,0 8.5,1 9.5,1 9.5,6.3 11.5,6.3 11.5,7.3 14.8,7.3 14.8,8.5 17.2,8.5 17.2,9.7 18.2,9.7 18.2,10.7 19.2,10.7 19.2,19.2 18.2,19.2 18.2,22.5 17.2,22.5 17.2,25.1 5.3,25.1 5.3,22.5 4.2,22.5 4.2,20.2 3.2,20.2 3.2,18 2.2,18 2.2,15.6 1,15.6 1,14.2 0,14.2 0,10.3 4.2,10.3 4.2,11.3 5.1,11.3 5.1,1 6,1" fill="#000" stroke="#d8d8d8" stroke-width="0.5" stroke-linejoin="miter"/><polygon points="6,0 8.5,0 8.5,1 9.5,1 9.5,6.3 11.5,6.3 11.5,7.3 14.8,7.3 14.8,8.5 17.2,8.5 17.2,9.7 18.2,9.7 18.2,10.7 19.2,10.7 19.2,19.2 18.2,19.2 18.2,22.5 17.2,22.5 17.2,25.1 5.3,25.1 5.3,22.5 4.2,22.5 4.2,20.2 3.2,20.2 3.2,18 2.2,18 2.2,15.6 1,15.6 1,14.2 0,14.2 0,10.3 4.2,10.3 4.2,11.3 5.1,11.3 5.1,1 6,1" fill="#000"/><polygon points="6.2,1 8.5,1 8.5,7.3 11.5,7.3 11.5,8.5 14.8,8.5 14.8,9.7 17.2,9.7 17.2,10.7 18.2,10.7 18.2,19.2 17.2,19.2 17.2,22.5 16.2,22.5 16.2,24.1 6.3,24.1 6.3,22.5 5.2,22.5 5.2,20.2 4.2,20.2 4.2,18 3.2,18 3.2,15.6 2,15.6 2,14.2 1,14.2 1,11.3 4.2,11.3 4.2,12.3 6.2,12.3" fill="#fff"/><rect x="5.2" y="12.3" width="1.00" height="3.30" fill="#000"/><rect x="8.5" y="7.3" width="1.00" height="4.60" fill="#000"/><rect x="11.5" y="8.5" width="1.00" height="3.40" fill="#000"/><rect x="14.8" y="9.7" width="1.20" height="3.50" fill="#000"/></svg>
</body></html>
